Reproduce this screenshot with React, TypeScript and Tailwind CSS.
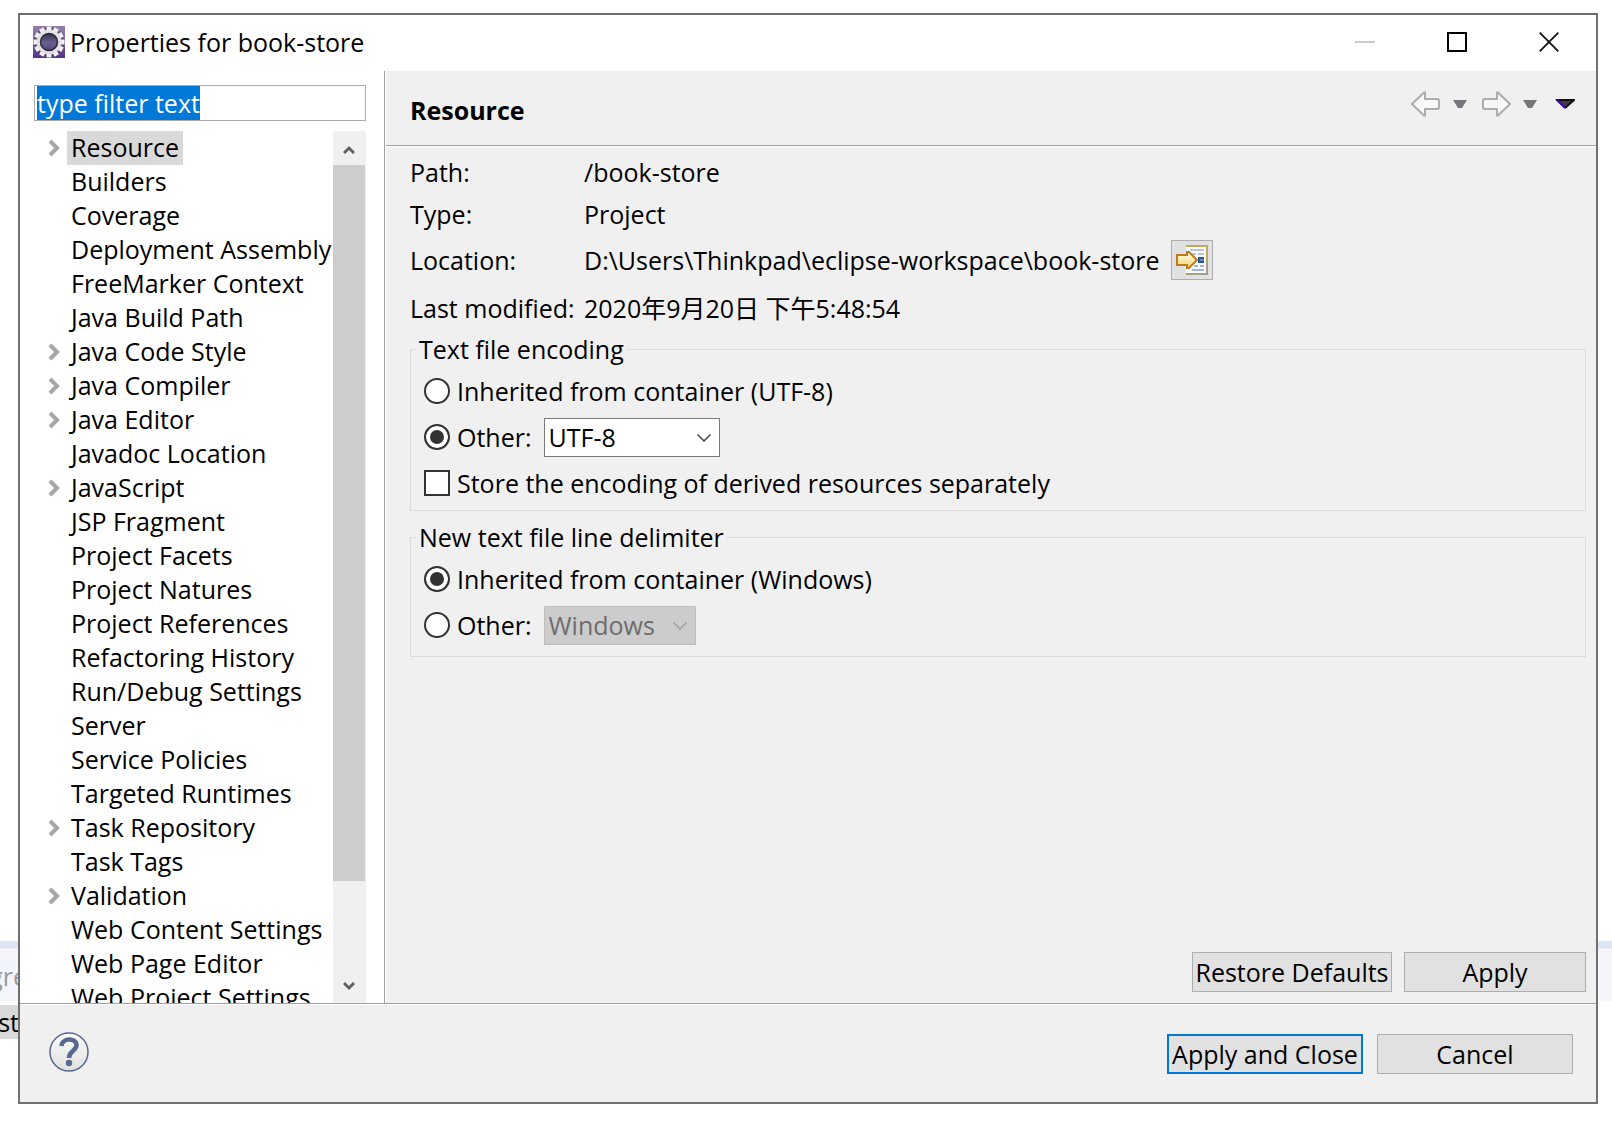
import { useEffect, useRef, useState } from 'react';
import type { ReactNode } from 'react';

type TreeEntry = { label: string; expandable?: boolean };

const ENTRIES: TreeEntry[] = [
  { label: 'Resource', expandable: true },
  { label: 'Builders' },
  { label: 'Coverage' },
  { label: 'Deployment Assembly' },
  { label: 'FreeMarker Context' },
  { label: 'Java Build Path' },
  { label: 'Java Code Style', expandable: true },
  { label: 'Java Compiler', expandable: true },
  { label: 'Java Editor', expandable: true },
  { label: 'Javadoc Location' },
  { label: 'JavaScript', expandable: true },
  { label: 'JSP Fragment' },
  { label: 'Project Facets' },
  { label: 'Project Natures' },
  { label: 'Project References' },
  { label: 'Refactoring History' },
  { label: 'Run/Debug Settings' },
  { label: 'Server' },
  { label: 'Service Policies' },
  { label: 'Targeted Runtimes' },
  { label: 'Task Repository', expandable: true },
  { label: 'Task Tags' },
  { label: 'Validation', expandable: true },
  { label: 'Web Content Settings' },
  { label: 'Web Page Editor' },
  { label: 'Web Project Settings' },
];

function AppIcon() {
  const teeth = Array.from({ length: 12 }, (_, i) => i * 30);
  return (
    <svg viewBox="0 0 32 32" className="size-8 shrink-0" aria-hidden="true">
      <defs>
        <linearGradient id="tile" x1="0" y1="0" x2="0" y2="1">
          <stop offset="0" stopColor="#957fa8" />
          <stop offset="0.5" stopColor="#77609a" />
          <stop offset="1" stopColor="#57308a" />
        </linearGradient>
        <linearGradient id="core" x1="0" y1="0" x2="0" y2="1">
          <stop offset="0" stopColor="#302c40" />
          <stop offset="0.55" stopColor="#6b6191" />
          <stop offset="1" stopColor="#4a3d70" />
        </linearGradient>
      </defs>
      <rect width="32" height="32" fill="url(#tile)" />
      <circle cx="16" cy="16" r="15" fill="#4a3a62" opacity="0.6" />
      {teeth.map((a) => (
        <rect key={a} x="13.500" y="0.500" width="5" height="6" fill="#f1f0f2" transform={`rotate(${a} 16 16)`} />
      ))}
      <circle cx="16" cy="16" r="10.5" fill="url(#core)" stroke="#e4e3e2" strokeWidth="3.500" />
      <circle cx="16" cy="16" r="8.5" fill="none" stroke="#2c2740" strokeWidth="1.500" />
    </svg>
  );
}

function TreeChevron() {
  return (
    <svg viewBox="0 0 12 18" className="h-[18px] w-3" aria-hidden="true">
      <path d="M2 2l7 7-7 7" fill="none" stroke="#a6a6a6" strokeWidth="4" />
    </svg>
  );
}

function ScrollChevron({ down }: { down?: boolean }) {
  return (
    <svg viewBox="0 0 12 10" className="h-[10px] w-3" aria-hidden="true">
      <path d={down ? 'M1 2l5 5 5-5' : 'M1 8l5-5 5 5'} fill="none" stroke="#606060" strokeWidth="3" />
    </svg>
  );
}

function HistoryArrow({ forward }: { forward?: boolean }) {
  return (
    <svg viewBox="0 0 30 26" className="h-[26px] w-[30px]" aria-hidden="true">
      <path
        d={
          forward
            ? 'M29 13L17 1.500H16V8H4Q2 8 2 10V16Q2 18 4 18H16V24.500H17Z'
            : 'M1 13L13 1.500H14V8H26Q28 8 28 10V16Q28 18 26 18H14V24.500H13Z'
        }
        fill="#f8f8f8"
        stroke="#acacac"
        strokeWidth="2"
        strokeLinejoin="round"
      />
    </svg>
  );
}

function Triangle() {
  return (
    <svg viewBox="0 0 14 8" className="h-2 w-[14px]" aria-hidden="true">
      <path d="M0 0H14L9 8H5Z" fill="#76777a" />
    </svg>
  );
}

function OpenLocationIcon() {
  return (
    <svg viewBox="0 0 32 32" className="size-8" aria-hidden="true">
      <defs>
        <linearGradient id="arrow" x1="0" y1="0" x2="0" y2="1">
          <stop offset="0" stopColor="#fffdf0" />
          <stop offset="1" stopColor="#f7d468" />
        </linearGradient>
      </defs>
      <path d="M10 1H32V31H10Z" fill="#f7f9ff" />
      <path d="M10 2H31V30" fill="none" stroke="#c2a95c" strokeWidth="2" />
      <path d="M10 30H32M31 18V31" stroke="#a59f88" strokeWidth="2" />
      <path d="M14 6H28M16 10H20M22 10H28" stroke="#b9c3dd" strokeWidth="2" />
      <path d="M16 26H28M18 22H22M24 22H28" stroke="#a3b4d8" strokeWidth="2" />
      <path d="M22 13H28V19H22Z" fill="#2a5598" />
      <path d="M24 16H28" stroke="#7d86b8" strokeWidth="2" />
      <path
        d="M1 11H11V8H13L21 16L13 24H11V21H1Z"
        fill="url(#arrow)"
        stroke="#ba7d1c"
        strokeWidth="2"
      />
    </svg>
  );
}

function HelpIcon() {
  return (
    <svg viewBox="0 0 40 40" className="size-10" aria-hidden="true">
      <defs>
        <linearGradient id="help" x1="0" y1="0" x2="0" y2="1">
          <stop offset="0" stopColor="#fbfbfb" />
          <stop offset="1" stopColor="#e0e0e0" />
        </linearGradient>
      </defs>
      <circle cx="20" cy="20" r="19" fill="url(#help)" stroke="#56698f" strokeWidth="1.500" />
      <path
        d="M12.500 14C13 5.500 27.500 5.500 27.500 13C27.500 19 20 18.500 20 26"
        fill="none"
        stroke="#56698f"
        strokeWidth="4.500"
      />
      <circle cx="20" cy="31" r="3.200" fill="#56698f" />
    </svg>
  );
}

function PushButton({ children, className }: { children: ReactNode; className: string }) {
  return (
    <button type="button" className={`h-10 shrink-0 bg-[#e1e1e1] text-center whitespace-nowrap ${className}`}>
      {children}
    </button>
  );
}

function Radio(props: { name: string; label: string; checked: boolean; onSelect: () => void }) {
  return (
    <label className="flex items-center gap-[7px]">
      <input
        type="radio"
        name={props.name}
        checked={props.checked}
        onChange={props.onSelect}
        className="size-[26px] shrink-0 appearance-none rounded-full border-2 border-[#333] bg-white checked:bg-[#333] checked:shadow-[inset_0_0_0_4px_white]"
      />
      {props.label}
    </label>
  );
}

function Combo(props: { label: string; options: string[]; disabled?: boolean; className: string }) {
  return (
    <div className={`relative h-[39px] ${props.className}`}>
      <select
        aria-label={props.label}
        disabled={props.disabled}
        className="size-full appearance-none border border-[#7a7a7a] bg-white pl-1 leading-8 disabled:border-[#bfbfbf] disabled:bg-[#ccc] disabled:text-[#6d6d6d] disabled:opacity-100"
      >
        {props.options.map((o) => (
          <option key={o}>{o}</option>
        ))}
      </select>
      <svg
        viewBox="0 0 14 8"
        className="pointer-events-none absolute top-4 right-[9px] h-2 w-[14px]"
        aria-hidden="true"
      >
        <path d="M.5 .5L7 7L13.500 .5" fill="none" stroke={props.disabled ? '#a0a0a0' : '#444'} strokeWidth="1.500" />
      </svg>
    </div>
  );
}

function Group({ title, children, className }: { title: string; children: ReactNode; className: string }) {
  return (
    <fieldset className={`border border-[#dcdcdc] pt-[7px] pl-[13px] ${className}`}>
      <legend className="-ml-[7px] h-6 px-[2px] leading-6">{title}</legend>
      {children}
    </fieldset>
  );
}

function Workbench() {
  return (
    <div className="absolute inset-0 flex flex-col justify-end overflow-hidden" aria-hidden="true">
      <div className="h-2 bg-[#dfe4f5]" />
      <div className="mt-px flex h-[51px] items-center bg-[#f4f5fb] text-[#9a9a9a]">
        <span className="flex w-[27px] justify-end">gre</span>
      </div>
      <div className="flex h-[127px] pt-1">
        <span className="flex h-[34px] w-[19px] items-center justify-end bg-[#d9d9d9]">st</span>
      </div>
    </div>
  );
}

export default function App() {
  const filterRef = useRef<HTMLInputElement>(null);
  const [filter, setFilter] = useState('type filter text');
  const [selected, setSelected] = useState('Resource');
  const [encoding, setEncoding] = useState('other');
  const [delimiter, setDelimiter] = useState('inherited');

  useEffect(() => {
    filterRef.current?.focus();
    filterRef.current?.select();
  }, []);

  return (
    <div className="relative flex h-screen bg-white pt-[13px] pr-[14px] pb-6 pl-[18px] font-['Open_Sans','Noto_Sans_CJK_SC',sans-serif] text-[25px] leading-8 text-black">
      <Workbench />
      <main className="relative flex min-w-0 flex-1 flex-col border-2 border-[#707070] bg-[#f0f0f0]">
        <header className="flex h-14 shrink-0 items-center bg-white pr-[37px] pb-[2px] pl-[13px]">
          <AppIcon />
          <h1 className="ml-[5px] flex-1">Properties for book-store</h1>
          <div className="flex items-center gap-[72px]">
            <button type="button" aria-label="Minimize" disabled>
              <svg viewBox="0 0 20 20" className="size-5">
                <path d="M0 10H20" stroke="#ccc" strokeWidth="2" />
              </svg>
            </button>
            <button type="button" aria-label="Maximize">
              <svg viewBox="0 0 20 20" className="size-5">
                <path d="M1 1H19V19H1Z" fill="none" stroke="#000" strokeWidth="2" />
              </svg>
            </button>
            <button type="button" aria-label="Close">
              <svg viewBox="0 0 20 20" className="size-5">
                <path d="M.7 .7L19.300 19.300M19.300 .7L.7 19.300" stroke="#111" strokeWidth="1.800" />
              </svg>
            </button>
          </div>
        </header>

        <div className="flex min-h-0 flex-1">
          <aside className="flex w-[364px] shrink-0 flex-col bg-white pt-[14px] pr-[18px] pl-[14px]">
            <input
              ref={filterRef}
              type="text"
              aria-label="Filter"
              value={filter}
              onChange={(e) => setFilter(e.target.value)}
              className="h-9 shrink-0 border border-[#ababab] bg-white px-[2px] leading-8 outline-none selection:bg-[#0078d7] selection:text-white"
            />
            <div className="mt-[10px] flex min-h-0 flex-1">
              <ul className="min-w-0 flex-1 overflow-hidden">
                {ENTRIES.map((entry) => (
                  <li key={entry.label} className="flex h-[34px] items-center">
                    <span className="flex w-[33px] shrink-0 justify-center pr-[7px] pl-[14px]">
                      {entry.expandable && <TreeChevron />}
                    </span>
                    <button
                      type="button"
                      onClick={() => setSelected(entry.label)}
                      className={`h-[34px] px-1 pb-[2px] text-left whitespace-nowrap ${selected === entry.label ? 'bg-[#d9d9d9]' : ''}`}
                    >
                      {entry.label}
                    </button>
                  </li>
                ))}
              </ul>
              <div className="flex w-[33px] shrink-0 flex-col bg-[#f0f0f0] pr-px">
                <button type="button" aria-label="Scroll up" className="flex h-[34px] shrink-0 items-center justify-center pt-1">
                  <ScrollChevron />
                </button>
                <div className="flex flex-1 flex-col">
                  <div className="h-[89%] bg-[#cdcdcd]" />
                </div>
                <button type="button" aria-label="Scroll down" className="flex h-[34px] shrink-0 items-center justify-center">
                  <ScrollChevron down />
                </button>
              </div>
            </div>
          </aside>

          <section className="flex min-w-0 flex-1 flex-col border-l border-[#a0a0a0]">
            <div className="flex min-h-0 flex-1 flex-col border-l border-white">
              <div className="flex h-[75px] shrink-0 items-center border-b border-[#a0a0a0] pt-1 pr-[21px] pl-6">
                <h2 className="flex-1 font-bold">Resource</h2>
                <div className="flex items-center pb-3">
                  <button type="button" aria-label="Back">
                    <HistoryArrow />
                  </button>
                  <button type="button" aria-label="Back history" className="ml-3">
                    <Triangle />
                  </button>
                  <button type="button" aria-label="Forward" className="ml-[14px]">
                    <HistoryArrow forward />
                  </button>
                  <button type="button" aria-label="Forward history" className="ml-3">
                    <Triangle />
                  </button>
                  <button type="button" aria-label="View menu" className="ml-[18px]">
                    <svg viewBox="0 0 20 10" className="h-[10px] w-5">
                      <path d="M1 1H19L10 9Z" fill="#4a3550" />
                      <path d="M1 1H19L10 9" fill="none" stroke="#111" strokeWidth="2" />
                      <path d="M1 0L10 9" stroke="#3b0a9c" strokeWidth="2" />
                    </svg>
                  </button>
                </div>
              </div>

              <div className="flex min-h-0 flex-1 flex-col border-t border-white pt-1 pr-[10px] pb-[11px] pl-6">
                <dl className="grid grid-cols-[174px_1fr] grid-rows-[42px_42px_50px_46px] items-center">
                  <dt>Path:</dt>
                  <dd>/book-store</dd>
                  <dt>Type:</dt>
                  <dd>Project</dd>
                  <dt>Location:</dt>
                  <dd className="flex items-center gap-[11px]">
                    D:\Users\Thinkpad\eclipse-workspace\book-store
                    <button
                      type="button"
                      aria-label="Show in system explorer"
                      className="flex h-10 w-[42px] items-center justify-center border border-[#adadad] bg-[#e1e1e1]"
                    >
                      <OpenLocationIcon />
                    </button>
                  </dd>
                  <dt>Last modified:</dt>
                  <dd>2020年9月20日 下午5:48:54</dd>
                </dl>

                <Group title="Text file encoding" className="mt-[6px] pb-1">
                  <div className="flex h-[46px] items-center">
                    <Radio
                      name="encoding"
                      label="Inherited from container (UTF-8)"
                      checked={encoding === 'inherited'}
                      onSelect={() => setEncoding('inherited')}
                    />
                  </div>
                  <div className="flex h-[46px] items-center gap-3">
                    <Radio
                      name="encoding"
                      label="Other:"
                      checked={encoding === 'other'}
                      onSelect={() => setEncoding('other')}
                    />
                    <Combo label="Text file encoding" options={['UTF-8', 'GBK', 'US-ASCII']} className="w-44" />
                  </div>
                  <label className="flex h-[46px] items-center gap-[7px]">
                    <input
                      type="checkbox"
                      className="size-[26px] shrink-0 appearance-none border-2 border-[#333] bg-white checked:bg-[#333] checked:shadow-[inset_0_0_0_4px_white]"
                    />
                    Store the encoding of derived resources separately
                  </label>
                </Group>

                <Group title="New text file line delimiter" className="mt-[14px] pb-2">
                  <div className="flex h-[46px] items-center">
                    <Radio
                      name="delimiter"
                      label="Inherited from container (Windows)"
                      checked={delimiter === 'inherited'}
                      onSelect={() => setDelimiter('inherited')}
                    />
                  </div>
                  <div className="flex h-[46px] items-center gap-3">
                    <Radio
                      name="delimiter"
                      label="Other:"
                      checked={delimiter === 'other'}
                      onSelect={() => setDelimiter('other')}
                    />
                    <Combo
                      label="New text file line delimiter"
                      options={['Windows', 'Unix']}
                      disabled={delimiter !== 'other'}
                      className="w-[152px]"
                    />
                  </div>
                </Group>

                <div className="mt-auto flex justify-end gap-3">
                  <PushButton className="w-[200px] border border-[#adadad]">Restore Defaults</PushButton>
                  <PushButton className="w-[182px] border border-[#adadad]">Apply</PushButton>
                </div>
              </div>
            </div>
          </section>
        </div>

        <footer className="shrink-0 border-t border-[#a0a0a0]">
          <div className="flex h-[98px] items-center border-t border-white pr-[23px] pl-[29px]">
            <button type="button" aria-label="Help" className="mr-auto pb-1">
              <HelpIcon />
            </button>
            <div className="flex gap-[14px]">
              <PushButton className="w-[196px] border-2 border-[#0078d7]">Apply and Close</PushButton>
              <PushButton className="w-[196px] border border-[#adadad]">Cancel</PushButton>
            </div>
          </div>
        </footer>
      </main>
    </div>
  );
}
